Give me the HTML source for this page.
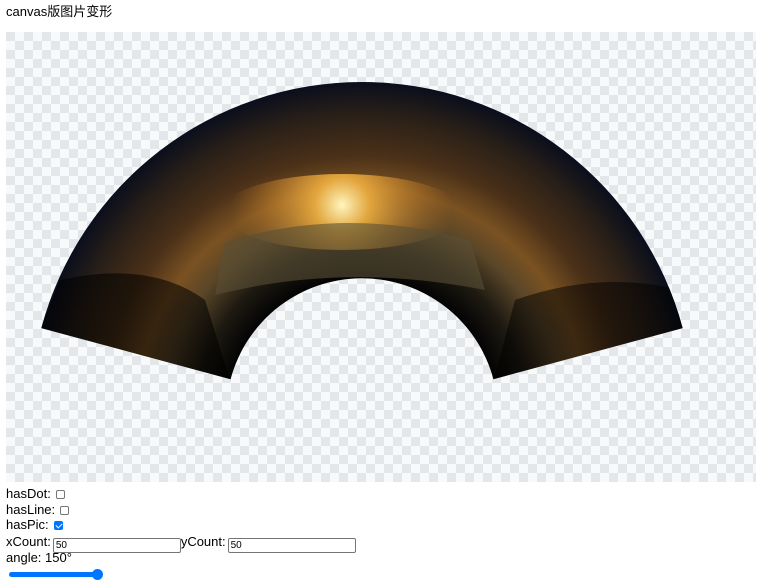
<!DOCTYPE html>
<html><head><meta charset="utf-8"><style>
body{margin:0;width:766px;height:581px;background:#fff;font-family:"Liberation Sans","Noto Sans CJK SC",sans-serif;font-size:13px;color:#000;position:relative;overflow:hidden}
.t{position:absolute;left:6px;white-space:nowrap;line-height:16px}
.cb{display:inline-block;width:9px;height:9px;border:1px solid #767676;border-radius:2px;vertical-align:-1px;margin-left:5px;box-sizing:border-box}
.ck{background:#0075ff;border-color:#0075ff;position:relative}
.ck:after{content:"";position:absolute;left:2px;top:0px;width:3px;height:5px;border:solid #fff;border-width:0 1.5px 1.5px 0;transform:rotate(45deg)}
.in{display:inline-block;width:124px;height:13px;border:1px solid #767676;border-radius:2px;font-size:10px;line-height:13px;padding-left:2px;vertical-align:-2px;margin-left:2px}
</style></head><body>
<div class="t" style="top:4px">canvas版图片变形</div>
<svg style="position:absolute;left:0;top:0" width="766" height="581">
<defs>
<pattern id="ch" x="6" y="32" width="18" height="18" patternUnits="userSpaceOnUse">
<rect width="18" height="18" fill="#f7f9fb"/><rect width="9" height="9" fill="#e4e7ea"/><rect x="9" y="9" width="9" height="9" fill="#e4e7ea"/>
</pattern>
<radialGradient id="g" cx="362" cy="414" r="332" gradientUnits="userSpaceOnUse">
<stop offset="0.41" stop-color="#040404"/>
<stop offset="0.5" stop-color="#1e1a12"/>
<stop offset="0.6" stop-color="#5a4628"/>
<stop offset="0.68" stop-color="#7a5222"/>
<stop offset="0.78" stop-color="#4a3018"/>
<stop offset="0.9" stop-color="#2a2018"/>
<stop offset="1" stop-color="#0a0e1c"/>
</radialGradient>
<radialGradient id="s" cx="342" cy="205" r="110" gradientUnits="userSpaceOnUse">
<stop offset="0" stop-color="#fff6c0"/>
<stop offset="0.25" stop-color="#f0b040" stop-opacity="0.9"/>
<stop offset="1" stop-color="#c07020" stop-opacity="0"/>
</radialGradient>
<clipPath id="fan"><path d="M41.3,328.1 A332,332 0 0 1 682.7,328.1 L493.4,379.2 A136,136 0 0 0 230.6,379.2 Z"/></clipPath>
</defs>
<rect x="6" y="32" width="750" height="450" fill="url(#ch)"/>
<g clip-path="url(#fan)">
<rect x="0" y="0" width="766" height="581" fill="url(#g)"/>
<ellipse cx="342" cy="212" rx="120" ry="38" fill="url(#s)"/>
<path d="M225,242 Q345,205 470,240 L485,290 Q345,262 215,295Z" fill="#5a5035" opacity="0.6"/>
<path d="M40,330 L230,380 L205,300 Q150,260 60,280Z" fill="#000" opacity="0.55"/>
<path d="M683,330 L494,380 L515,300 Q600,270 680,290Z" fill="#000" opacity="0.5"/>
</g>
</svg>
<div class="t" style="top:486px">hasDot:<span class="cb"></span></div>
<div class="t" style="top:502px">hasLine:<span class="cb"></span></div>
<div class="t" style="top:517px">hasPic:<span class="cb ck"></span></div>
<div class="t" style="top:534px">xCount:<span class="in">50</span>yCount:<span class="in">50</span></div>
<div class="t" style="top:550px">angle: 150°</div>
<div style="position:absolute;left:9px;top:572px;width:90px;height:5px;border-radius:3px;background:#0075ff"></div>
<div style="position:absolute;left:92px;top:569px;width:11px;height:11px;border-radius:50%;background:#0075ff"></div>
</body></html>
